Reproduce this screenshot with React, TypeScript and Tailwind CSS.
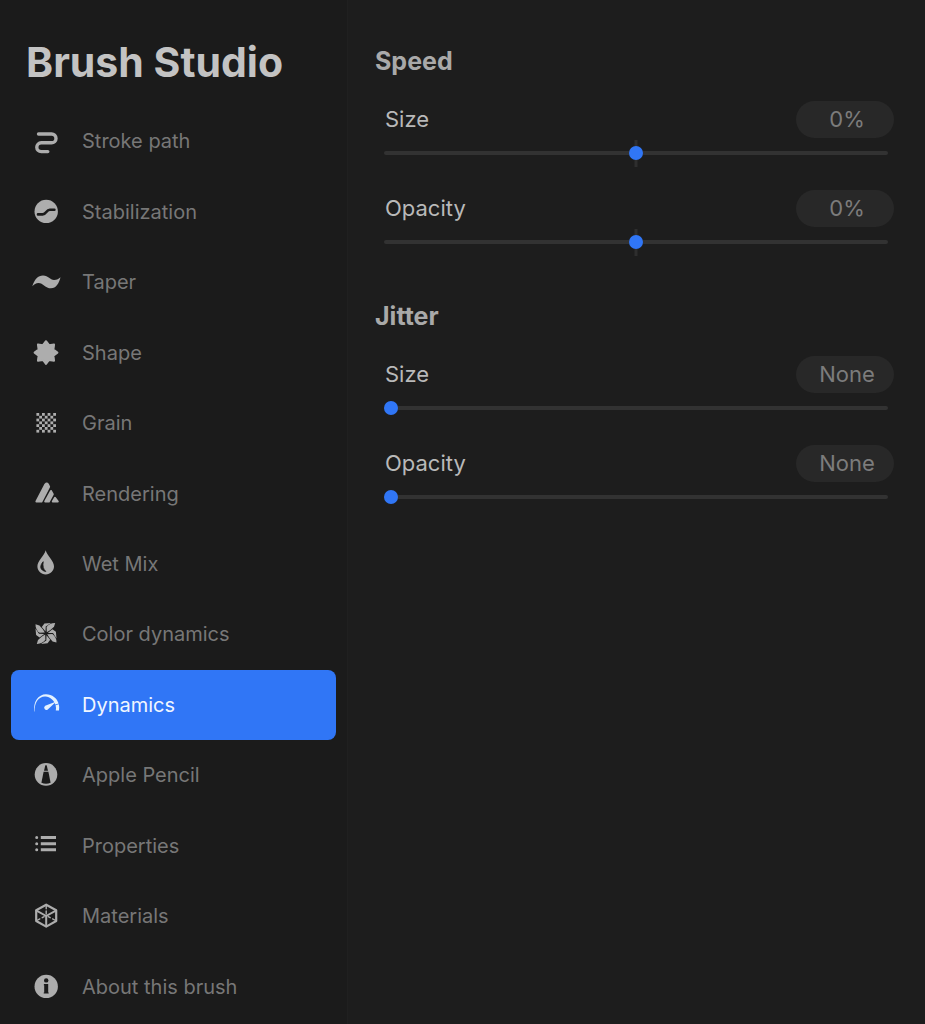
import { useState } from "react";
import type { ReactNode } from "react";

const BG = "#1b1b1b";

const starPoints = Array.from({ length: 16 }, (_, i) => {
  const radius = i % 2 === 0 ? 11.4 : 8;
  const angle = (i * Math.PI) / 8;
  return `${(14 + radius * Math.sin(angle)).toFixed(2)},${(13.6 - radius * Math.cos(angle)).toFixed(2)}`;
}).join(" ");

const checkerCells = Array.from({ length: 49 }, (_, i) => i).filter((i) => i % 2 === 0);

const icons: Record<string, ReactNode> = {
  stroke: (
    <path
      d="M6.5 7H19.6a4.4 4.4 0 0 1 0 8.8H9.2a4.4 4.4 0 0 0 0 8.8h6.6"
      fill="none"
      stroke="currentColor"
      strokeWidth="3.4"
      strokeLinecap="round"
    />
  ),
  stabilization: (
    <>
      <circle cx="14.2" cy="13.4" r="11.7" fill="currentColor" />
      <path
        d="M6 16.4h4.600c4 0 3.400-4.600 7.200-4.600h4.600"
        fill="none"
        stroke={BG}
        strokeWidth="2.6"
        strokeLinecap="round"
      />
    </>
  ),
  taper: (
    <path
      d="M.3 18.300C2.500 11.500 6 7.600 11 7.600c5.500 0 7 4.400 11 4.400 3 0 4.800-1.100 6.500-2.700-1.500 6.200-4.500 11-9.500 11-5.500 0-8-5.400-12.500-5.400-2.500 0-4.500 1.300-6.200 3.400z"
      fill="currentColor"
    />
  ),
  shape: (
    <polygon
      points={starPoints}
      fill="currentColor"
      stroke="currentColor"
      strokeWidth="2"
      strokeLinejoin="round"
    />
  ),
  grain: (
    <g fill="currentColor">
      {checkerCells.map((i) => (
        <rect key={i} x={4.4 + (i % 7) * 2.8} y={4 + Math.floor(i / 7) * 2.8} width="2.8" height="2.8" />
      ))}
    </g>
  ),
  rendering: (
    <g fill="currentColor" stroke="currentColor" strokeWidth="2" strokeLinejoin="round">
      <path d="M4.400 21.500 13.400 4.300q1.300-1.500 2.600 0l1.100 2.400L9.500 21.500z" />
      <path d="M13.200 21.500 19 11l1.800 3.200-3.900 7.300z" />
      <path d="M20.800 21.500l2.200-3.700 2.800 3.700z" />
    </g>
  ),
  wet: (
    <>
      <path
        d="M13.700.2C15 5.200 22 11 22 16.300c0 4.600-3.700 8.100-8.300 8.100s-8.300-3.500-8.300-8.100C5.400 11 12.400 5.200 13.700.2z"
        fill="currentColor"
      />
      <path d="M11.200 11.700c-3.800 4.200-3.400 8.600 2.600 9.800-2.600-2.400-3.300-5.400-2.600-9.800z" fill={BG} stroke={BG} strokeWidth=".8" />
    </>
  ),
  color: (
    <g fill="currentColor" transform="translate(14 13.4)">
      {[0, 90, 180, 270].map((angle) => (
        <g key={angle} transform={`rotate(${angle})`}>
          <path d="M.8-1.200.6-6.400Q3.600-10.600 9.200-10.500L8-6.600 4.400-3.400z" />
          <path d="M-.5-1.800-4.200-6.400-1.600-9.900 5-10.500-.3-7z" />
        </g>
      ))}
    </g>
  ),
  dynamics: (
    <g fill="currentColor">
      <path d="M2.600 20.600C.6 11.200 6.200 3.300 14 3.300c6.200 0 11 4 12.600 9.300l-3.300 1C21.600 8.700 18 6.100 13.600 5.500 6.900 5 1.900 11.600 3 20.600z" />
      <path d="M23.600 14.200l3.200-1q.8 3 .2 6.200h-3.200q.5-2.700-.2-5.200z" />
      <path d="M24.300 10.400 15.800 18.500a2.200 2.200 0 1 1-2.600-3.700z" />
    </g>
  ),
  pencil: (
    <>
      <circle cx="14" cy="13.4" r="11.3" fill="currentColor" />
      <path d="M13.200 4.800q.8-1.500 1.600 0L16 9.800h-4z" fill={BG} />
      <path d="M11.600 10.700h4.800l2.200 11q-4.600 2.100-9.200 0z" fill={BG} />
    </>
  ),
  properties: (
    <g fill="none" stroke="currentColor" strokeWidth="3">
      <path d="M4.700 5.600h.01M4.700 11.800h.01M4.700 17.800h.01" strokeLinecap="round" />
      <path d="M8.800 5.600h15.200M8.800 11.800h15.200M8.800 17.800h15.200" />
    </g>
  ),
  materials: (
    <g fill="none" stroke="currentColor" strokeLinejoin="round" strokeLinecap="round">
      <path d="M14.200 2.700 24.200 8.300V19l-10 5.600L4.200 19V8.300z" strokeWidth="2.2" />
      <path d="M4.500 8.600l9.700 5.400 9.700-5.400M14.200 14v10.200" strokeWidth="2" />
      <path d="M14.200 3.500v3.200M14.200 9v3M4.800 18.500l3-1.600M10.200 15.700l2-1M23.600 18.500l-3-1.600M18.200 15.700l-2-1" strokeWidth="1.400" />
    </g>
  ),
  about: (
    <>
      <circle cx="14.2" cy="13.4" r="11.7" fill="currentColor" />
      <circle cx="14.2" cy="7.4" r="2.2" fill={BG} />
      <path d="M12 10.900h4.200v8.500h.5v1.200h-5v-1.200h.5v-7.200h-.5z" fill={BG} />
    </>
  ),
};

const items = [
  { icon: "stroke", label: "Stroke path" },
  { icon: "stabilization", label: "Stabilization" },
  { icon: "taper", label: "Taper" },
  { icon: "shape", label: "Shape" },
  { icon: "grain", label: "Grain" },
  { icon: "rendering", label: "Rendering" },
  { icon: "wet", label: "Wet Mix" },
  { icon: "color", label: "Color dynamics" },
  { icon: "dynamics", label: "Dynamics" },
  { icon: "pencil", label: "Apple Pencil" },
  { icon: "properties", label: "Properties" },
  { icon: "materials", label: "Materials" },
  { icon: "about", label: "About this brush" },
];

function NavItem({ icon, label, active, onSelect }: { icon: string; label: string; active: boolean; onSelect: () => void }) {
  return (
    <button
      type="button"
      onClick={onSelect}
      aria-current={active ? "page" : undefined}
      className={`flex items-center gap-[22px] rounded-lg px-[21px] text-left text-xl ${
        active ? "bg-[#3076f6] text-[#f0f6ff]" : "text-[#777777]"
      }`}
    >
      <svg
        viewBox="0 0 28 28"
        aria-hidden="true"
        className={`size-7 shrink-0 overflow-visible ${active ? "text-[#e4f2ff]" : "text-[#adadad]"}`}
      >
        {icons[icon]}
      </svg>
      <span>{label}</span>
    </button>
  );
}

function SliderRow({ id, label, bipolar = false }: { id: string; label: string; bipolar?: boolean }) {
  const [value, setValue] = useState(0);
  const text = bipolar ? `${value}%` : value === 0 ? "None" : `${value}%`;
  return (
    <div className="flex flex-col gap-px">
      <div className="flex h-[37px] items-center justify-between pl-[10px]">
        <label htmlFor={id} className="text-[22px] text-[#b9b9b9]">
          {label}
        </label>
        <button
          type="button"
          className="flex h-[37px] w-[98px] items-center justify-center rounded-full bg-[#282828] pl-1 text-[22px] text-[#7c7c7c]"
        >
          {text}
        </button>
      </div>
      <div className="relative ml-[9px] mr-[6px] flex h-7 items-center">
        {bipolar && <span className="absolute left-1/2 top-px h-[27px] w-[3px] -translate-x-1/2 bg-[#2e2e2e]" />}
        <input
          id={id}
          type="range"
          min={bipolar ? -100 : 0}
          max={100}
          value={value}
          onChange={(e) => setValue(Number(e.target.value))}
          className="relative h-7 w-full cursor-pointer appearance-none bg-transparent [&::-webkit-slider-runnable-track]:h-1 [&::-webkit-slider-runnable-track]:rounded-sm [&::-webkit-slider-runnable-track]:bg-[#323232] [&::-webkit-slider-thumb]:mt-[-5px] [&::-webkit-slider-thumb]:size-[14px] [&::-webkit-slider-thumb]:appearance-none [&::-webkit-slider-thumb]:rounded-full [&::-webkit-slider-thumb]:bg-[#3076f6]"
        />
      </div>
    </div>
  );
}

function Section({ title, bipolar = false }: { title: string; bipolar?: boolean }) {
  const id = title.toLowerCase();
  return (
    <section>
      <h2 className="text-[25px] font-bold leading-8 text-[#a9a9a9]">{title}</h2>
      <div className="mt-6 flex flex-col gap-[23px]">
        <SliderRow id={`${id}-size`} label="Size" bipolar={bipolar} />
        <SliderRow id={`${id}-opacity`} label="Opacity" bipolar={bipolar} />
      </div>
    </section>
  );
}

export default function App() {
  const [selected, setSelected] = useState("Dynamics");
  return (
    <div className="flex min-h-screen bg-[#1d1d1d] font-['Inter','Liberation_Sans',sans-serif]">
      <aside className="flex w-[348px] shrink-0 flex-col border-r border-[#202020] bg-[#1b1b1b] px-[11px] pb-0.5">
        <h1 className="flex h-[106px] shrink-0 items-center pl-[15px] pt-[18px] text-[41px] font-bold leading-none text-[#c3c3c3]">
          Brush Studio
        </h1>
        <nav aria-label="Brush settings" className="grid grow auto-rows-fr">
          {items.map((item) => (
            <NavItem
              key={item.label}
              icon={item.icon}
              label={item.label}
              active={item.label === selected}
              onSelect={() => setSelected(item.label)}
            />
          ))}
        </nav>
      </aside>
      <main className="flex min-w-0 grow flex-col gap-11 pl-[27px] pr-[31px] pt-[45px]">
        <Section title="Speed" bipolar />
        <Section title="Jitter" />
      </main>
    </div>
  );
}
